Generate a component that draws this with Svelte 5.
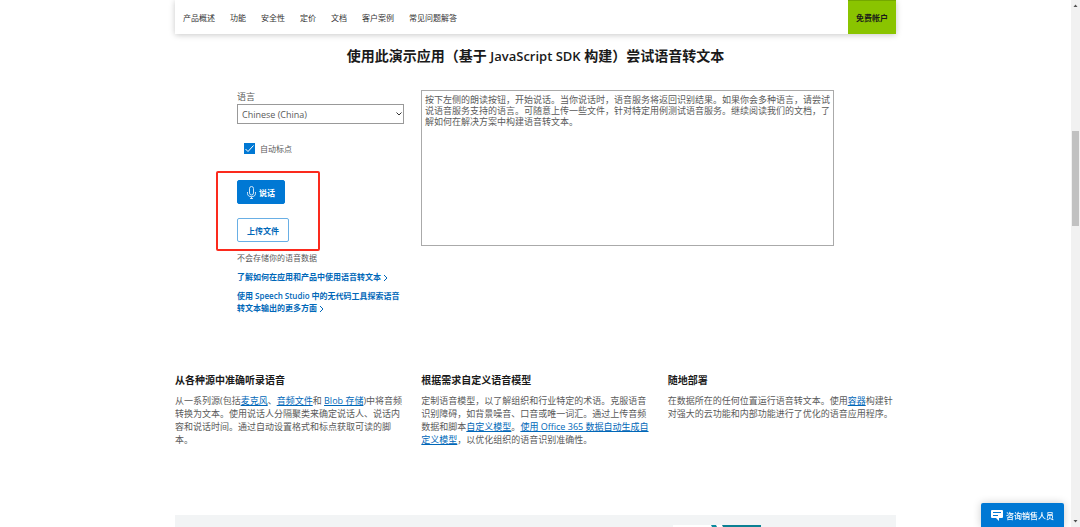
<script>
  const nav = ['产品概述', '功能', '安全性', '定价', '文档', '客户案例', '常见问题解答'];
  const intro =
    '按下左侧的朗读按钮，开始说话。当你说话时，语音服务将返回识别结果。如果你会多种语言，请尝试说语音服务支持的语言。可随意上传一些文件，针对特定用例测试语音服务。继续阅读我们的文档，了解如何在解决方案中构建语音转文本。';
  let transcript = $state(intro);
  let punctuation = $state(true);
</script>

{#snippet chevron()}
  <svg class="chevron" viewBox="0 0 5 8" aria-hidden="true"><path d="M1 1l3 3-3 3" /></svg>
{/snippet}

<div class="page">
  <header class="bar">
    <nav>
      {#each nav as item}
        <a href="#top">{item}</a>
      {/each}
    </nav>
    <a class="free" href="#free">免费帐户</a>
  </header>

  <main>
    <h2>使用此演示应用（基于 <span>JavaScript SDK</span> 构建）尝试语音转文本</h2>

    <section class="demo">
      <form>
        <label class="lang" for="language">语言</label>
        <div class="select">
          <select id="language"><option>Chinese (China)</option></select>
          <svg viewBox="0 0 6 4" aria-hidden="true"><path d="M0.5 0.5L3 3l2.5-2.5" /></svg>
        </div>
        <label class="check">
          <input type="checkbox" bind:checked={punctuation} />
          自动标点
        </label>
        <div class="actions">
          <button type="button" class="speak">
            <svg viewBox="0 0 9 13" aria-hidden="true">
              <rect x="2.5" y="0.5" width="4" height="8.5" rx="2" />
              <path d="M0.5 6v1.5c0 2 1.5 3.2 4 3.2s4-1.2 4-3.2V6M4.5 10.7v1.8M3 12.5h3" />
            </svg>
            说话
          </button>
          <button type="button" class="upload">上传文件</button>
          <div class="marker"></div>
        </div>
        <p class="note">不会存储你的语音数据</p>
        <a class="more" href="#learn">了解如何在应用和产品中使用语音转文本 {@render chevron()}</a>
        <a class="more" href="#studio">使用 Speech Studio 中的无代码工具探索语音转文本输出的更多方面 {@render chevron()}</a>
      </form>
      <textarea aria-label="识别结果" spellcheck="false" bind:value={transcript}></textarea>
    </section>

    <section class="features">
      <article>
        <h3>从各种源中准确听录语音</h3>
        <p>从一系列源(包括<a href="#mic">麦克风</a>、<a href="#audio">音频文件</a>和 <a href="#blob">Blob 存储</a>)中将音频转换为文本。使用说话人分隔聚类来确定说话人、说话内容和说话时间。通过自动设置格式和标点获取可读的脚本。</p>
      </article>
      <article>
        <h3>根据需求自定义语音模型</h3>
        <p>定制语音模型，以了解组织和行业特定的术语。克服语音识别障碍，如背景噪音、口音或唯一词汇。通过上传音频数据和脚本<a href="#custom">自定义模型</a>。<a href="#office">使用 Office 365 数据自动生成自定义模型</a>，以优化组织的语音识别准确性。</p>
      </article>
      <article>
        <h3>随地部署</h3>
        <p>在数据所在的任何位置运行语音转文本。使用<a href="#container">容器</a>构建针对强大的云功能和内部功能进行了优化的语音应用程序。</p>
      </article>
    </section>

    <section class="band">
      <svg viewBox="0 0 88 24" aria-hidden="true">
        <path fill="#fff" d="M0 0h88v24H0z" />
        <path fill="#0b8a9e" d="M38 0h5l12 24h-5z" />
        <path fill="#0b8093" d="M49 0h39v24H61z" />
      </svg>
    </section>
  </main>
</div>

<button type="button" class="sales">
  <svg viewBox="0 0 12 11" aria-hidden="true">
    <path fill="#fff" d="M1 0h10q1 0 1 1v6q0 1-1 1H8v3L5 8H1Q0 8 0 7V1q0-1 1-1z" />
    <path stroke="#0078d4" d="M2 2.5h8M2 5.5h5" />
  </svg>
  咨询销售人员
</button>

<div class="rail" aria-hidden="true">
  <svg viewBox="0 0 5 3"><path d="M0.5 3L2.5 0.5 4.5 3z" /></svg>
  <div class="thumb"></div>
  <svg viewBox="0 0 5 3"><path d="M0.5 0L2.5 2.5 4.5 0z" /></svg>
</div>

<style>
  :global(body) {
    margin: 0;
    overflow: hidden;
    background: #fff;
    color: #5a5a5a;
    font: 9px/13px 'Open Sans', 'Noto Sans CJK SC', sans-serif;
  }
  :global(#app) {
    height: 100vh;
    overflow: hidden;
  }
  * {
    box-sizing: border-box;
  }
  a {
    color: #0067b8;
  }
  button,
  select,
  textarea {
    font: inherit;
    margin: 0;
  }
  h2,
  h3,
  p {
    margin: 0;
  }
  .page {
    margin-right: 9px;
  }
  .bar,
  main {
    max-width: 721px;
    margin: 0 auto;
  }
  .bar {
    display: flex;
    justify-content: space-between;
    height: 34px;
    box-shadow: 0 1px 6px rgba(0, 0, 0, 0.22);
    font-size: 8px;
  }
  nav {
    display: flex;
    align-items: center;
    gap: 15px;
    padding-left: 8px;
  }
  nav a {
    color: #333;
    text-decoration: none;
  }
  .free {
    display: flex;
    align-items: center;
    padding: 0 8px;
    background: #8ac400;
    border-top: 1px solid #74a800;
    color: #1a1a1a;
    font-weight: 700;
    text-decoration: none;
  }
  h2 {
    margin-top: 12px;
    color: #1a1a1a;
    font-size: 14px;
    line-height: 20px;
    font-weight: 700;
    text-align: center;
  }
  h2 span {
    font-size: 13px;
    font-weight: 600;
  }
  .demo {
    display: grid;
    grid-template-columns: minmax(0, 167px) 1fr;
    gap: 17px;
    align-items: start;
    margin-top: 24px;
    padding: 0 62px;
  }
  form {
    display: flex;
    flex-direction: column;
    align-items: flex-start;
  }
  .lang {
    line-height: 14px;
  }
  .select {
    position: relative;
    width: 100%;
  }
  .select svg {
    position: absolute;
    right: 2px;
    top: 8px;
    width: 6px;
    height: 4px;
    fill: none;
    stroke: #333;
    pointer-events: none;
  }
  select {
    display: block;
    width: 100%;
    height: 20px;
    padding: 0 4px;
    appearance: none;
    background: #fff;
    border: 1px solid #999;
    border-radius: 0;
    color: #5a5a5a;
  }
  .check {
    display: flex;
    align-items: center;
    gap: 5px;
    margin: 18px 0 0 7px;
    font-size: 8px;
  }
  .check input {
    width: 11px;
    height: 11px;
    margin: 0;
    appearance: none;
    border: 1px solid #0078d4;
  }
  .check input:checked {
    background: #0078d4
      url("data:image/svg+xml,%3Csvg xmlns='http://www.w3.org/2000/svg' viewBox='0 0 9 9'%3E%3Cpath d='M0.5 5l2.5 2.5 5.5-6' fill='none' stroke='white'/%3E%3C/svg%3E");
  }
  .actions {
    position: relative;
    display: flex;
    flex-direction: column;
    align-items: flex-start;
    gap: 14px;
    margin-top: 25px;
  }
  .actions button {
    display: flex;
    align-items: center;
    gap: 3px;
    height: 24px;
    padding: 0 9px;
    border: 1px solid #0078d4;
    border-radius: 2px;
    font-size: 8px;
    font-weight: 700;
  }
  .actions .speak {
    background: #0078d4;
    color: #fff;
  }
  .speak svg {
    width: 9px;
    height: 13px;
    fill: none;
    stroke: #fff;
    stroke-width: 0.8;
  }
  .actions .upload {
    background: #fff;
    border-color: #69afe5;
    color: #0067b8;
  }
  .marker {
    position: absolute;
    inset: -9px auto -9px -21px;
    width: 104px;
    border: 2px solid #fb2a1d;
    border-radius: 2px;
    pointer-events: none;
  }
  .note {
    margin-top: 9px;
    font-size: 8px;
  }
  .more {
    margin-top: 7px;
    font-size: 8px;
    line-height: 12px;
    font-weight: 600;
    text-decoration: none;
  }
  .chevron {
    width: 5px;
    height: 8px;
    vertical-align: -2px;
    fill: none;
    stroke: #0067b8;
  }
  textarea {
    display: block;
    width: 100%;
    height: 156px;
    padding: 3px;
    border: 1px solid #aaa;
    border-radius: 0;
    background: #fff;
    color: #5a5a5a;
    line-height: 11px;
    resize: none;
    overflow: hidden;
  }
  .features {
    display: grid;
    grid-template-columns: repeat(3, 1fr);
    gap: 18px;
    margin-top: 59px;
  }
  h3 {
    margin-bottom: 7px;
    color: #1a1a1a;
    font-size: 10px;
    line-height: 14px;
    font-weight: 700;
  }
  .band {
    display: flex;
    justify-content: flex-end;
    height: 60px;
    margin-top: 69px;
    padding: 10px 135px;
    background: #f2f4f5;
  }
  .band svg {
    width: 88px;
    height: 24px;
  }
  .sales {
    position: fixed;
    right: 16px;
    bottom: 0;
    display: flex;
    align-items: center;
    gap: 3px;
    height: 24px;
    padding: 0 10px;
    border: 0;
    border-radius: 2px 2px 0 0;
    background: #0078d4;
    box-shadow: 0 0 8px rgba(0, 0, 0, 0.2);
    color: #fff;
    font-size: 8px;
    font-weight: 500;
  }
  .sales svg {
    width: 12px;
    height: 11px;
  }
  .rail {
    position: fixed;
    inset: 0 0 0 auto;
    display: flex;
    flex-direction: column;
    align-items: center;
    width: 9px;
    padding: 4px 0;
    background: #f1f1f1;
  }
  .rail svg {
    width: 5px;
    height: 3px;
    fill: #505050;
  }
  .thumb {
    width: 7px;
    height: 95px;
    margin: 124px 0 auto;
    background: #c1c1c1;
  }
</style>
